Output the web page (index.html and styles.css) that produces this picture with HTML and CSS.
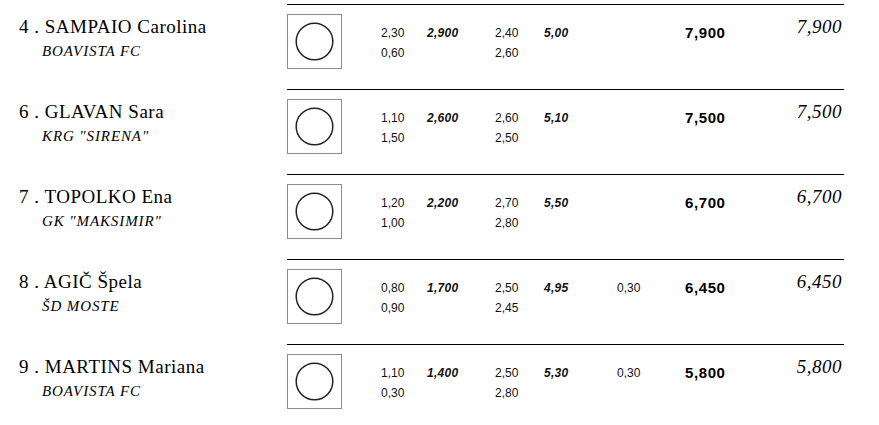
FILE: index.html
```html
<!DOCTYPE html>
<html>
<head>
<meta charset="utf-8">
<link rel="stylesheet" href="styles.css">
</head>
<body>
<div class="list">
  <div class="row">
    <div class="athlete"><div class="name">4 . SAMPAIO Carolina</div><div class="club">BOAVISTA FC</div></div>
    <div class="scores">
      <div class="mark"><svg width="55" height="55" viewBox="0 0 55 55"><circle cx="27.5" cy="27.5" r="18.3" fill="none" stroke="#222" stroke-width="1.5"/></svg></div>
      <div class="col"><span>2,30</span><span>0,60</span></div>
      <div class="col bi"><span>2,900</span></div>
      <div class="col"><span>2,40</span><span>2,60</span></div>
      <div class="col bi"><span>5,00</span></div>
      <div class="col"></div>
      <div class="total">7,900</div>
      <div class="final">7,900</div>
    </div>
  </div>
  <div class="row">
    <div class="athlete"><div class="name">6 . GLAVAN Sara</div><div class="club">KRG "SIRENA"</div></div>
    <div class="scores">
      <div class="mark"><svg width="55" height="55" viewBox="0 0 55 55"><circle cx="27.5" cy="27.5" r="18.3" fill="none" stroke="#222" stroke-width="1.5"/></svg></div>
      <div class="col"><span>1,10</span><span>1,50</span></div>
      <div class="col bi"><span>2,600</span></div>
      <div class="col"><span>2,60</span><span>2,50</span></div>
      <div class="col bi"><span>5,10</span></div>
      <div class="col"></div>
      <div class="total">7,500</div>
      <div class="final">7,500</div>
    </div>
  </div>
  <div class="row">
    <div class="athlete"><div class="name">7 . TOPOLKO Ena</div><div class="club">GK "MAKSIMIR"</div></div>
    <div class="scores">
      <div class="mark"><svg width="55" height="55" viewBox="0 0 55 55"><circle cx="27.5" cy="27.5" r="18.3" fill="none" stroke="#222" stroke-width="1.5"/></svg></div>
      <div class="col"><span>1,20</span><span>1,00</span></div>
      <div class="col bi"><span>2,200</span></div>
      <div class="col"><span>2,70</span><span>2,80</span></div>
      <div class="col bi"><span>5,50</span></div>
      <div class="col"></div>
      <div class="total">6,700</div>
      <div class="final">6,700</div>
    </div>
  </div>
  <div class="row">
    <div class="athlete"><div class="name">8 . AGIČ Špela</div><div class="club">ŠD MOSTE</div></div>
    <div class="scores">
      <div class="mark"><svg width="55" height="55" viewBox="0 0 55 55"><circle cx="27.5" cy="27.5" r="18.3" fill="none" stroke="#222" stroke-width="1.5"/></svg></div>
      <div class="col"><span>0,80</span><span>0,90</span></div>
      <div class="col bi"><span>1,700</span></div>
      <div class="col"><span>2,50</span><span>2,45</span></div>
      <div class="col bi"><span>4,95</span></div>
      <div class="col"><span>0,30</span></div>
      <div class="total">6,450</div>
      <div class="final">6,450</div>
    </div>
  </div>
  <div class="row">
    <div class="athlete"><div class="name">9 . MARTINS Mariana</div><div class="club">BOAVISTA FC</div></div>
    <div class="scores">
      <div class="mark"><svg width="55" height="55" viewBox="0 0 55 55"><circle cx="27.5" cy="27.5" r="18.3" fill="none" stroke="#222" stroke-width="1.5"/></svg></div>
      <div class="col"><span>1,10</span><span>0,30</span></div>
      <div class="col bi"><span>1,400</span></div>
      <div class="col"><span>2,50</span><span>2,80</span></div>
      <div class="col bi"><span>5,30</span></div>
      <div class="col"><span>0,30</span></div>
      <div class="total">5,800</div>
      <div class="final">5,800</div>
    </div>
  </div>
</div>
</body>
</html>
```
FILE: styles.css
```css
html, body {
  margin: 0;
  padding: 0;
  background: #fff;
  color: #000;
}
.list {
  padding-top: 4px;
  display: flex;
  flex-direction: column;
}
.row {
  display: flex;
  height: 85px;
}
.athlete {
  width: 268px;
  padding-left: 19px;
  padding-top: 13px;
  font-family: "Liberation Serif", "Times New Roman", serif;
}
.name {
  font-size: 19px;
  line-height: 20px;
  letter-spacing: 0.5px;
}
.club {
  font-size: 15px;
  line-height: 16px;
  font-style: italic;
  letter-spacing: 0.9px;
  padding-left: 23px;
  margin-top: 6px;
}
.scores {
  width: 555px;
  padding-right: 2px;
  border-top: 1px solid #000;
  display: grid;
  grid-template-columns: 94px 46px 68px 49px 73px 68px 1fr auto;
  align-items: start;
  font-family: "Liberation Sans", Arial, sans-serif;
  font-size: 12px;
  line-height: 20px;
}
.mark {
  width: 53px;
  height: 53px;
  margin-top: 9px;
  border: 1px solid #8c8c8c;
}
.mark svg {
  display: block;
  margin: -1px;
}
.col {
  padding-top: 18px;
  display: flex;
  flex-direction: column;
  color: #111;
}
.col.bi {
  font-weight: bold;
  font-style: italic;
  letter-spacing: 0.3px;
}
.total {
  padding-top: 18px;
  font-size: 15px;
  font-weight: bold;
  letter-spacing: 0.6px;
}
.final {
  padding-top: 11px;
  font-family: "Liberation Serif", "Times New Roman", serif;
  font-style: italic;
  font-size: 19px;
  line-height: 22px;
  letter-spacing: 0.5px;
}
```
